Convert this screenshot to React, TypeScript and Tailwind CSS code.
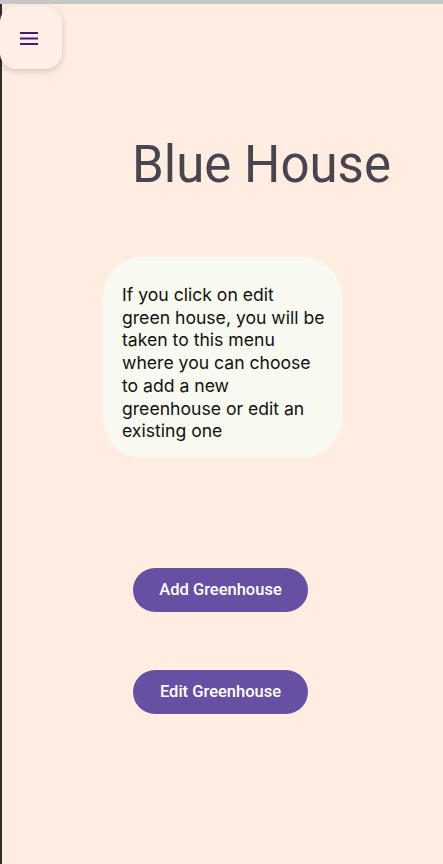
import React from "react";

const lines = [
  "If you click on edit",
  "green house, you will be",
  "taken to this menu",
  "where you can choose",
  "to add a new",
  "greenhouse or edit an",
  "existing one",
];

export default function App() {
  return (
    <div className="flex h-[864px] w-[443px] flex-col overflow-hidden bg-[#c6c6c6] pt-[4px]">
      <div className="flex flex-1 border-l-2 border-[#2e2e2e] bg-[#ffede2]">
        <div className="relative flex flex-1 flex-col items-center">
          <button className="absolute left-[-2px] top-[2px] flex h-[63px] w-[62px] items-center justify-center rounded-[16px] bg-[#fdeee6] shadow-[0_2px_6px_rgba(0,0,0,0.18)]">
            <svg width="20" height="16" viewBox="0 0 20 16" className="ml-[-4px]">
              <rect x="1" y="2" width="18" height="2" fill="#3c1f78" />
              <rect x="1" y="7.5" width="18" height="2" fill="#3c1f78" />
              <rect x="1" y="13" width="18" height="2" fill="#3c1f78" />
            </svg>
          </button>

          <h1 className="mt-[131px] ml-[78px] font-['Roboto',sans-serif] text-[51px] leading-[60px] text-[#49454f]">
            Blue House
          </h1>

          <div className="mt-[62px] w-[239px] whitespace-nowrap rounded-[40px] bg-[#f8f9f0] pl-[19px] pt-[27px] pb-[15px] font-['Inter',sans-serif] text-[17.6px] leading-[22.7px] text-[#111111]">
            {lines.map((l) => (
              <div key={l}>{l}</div>
            ))}
          </div>

          <button className="mt-[110px] ml-[-4px] h-[44px] w-[175px] rounded-full bg-[#6750a4] font-['Roboto',sans-serif] text-[16.5px] font-medium text-white">
            Add Greenhouse
          </button>
          <button className="mt-[58px] ml-[-4px] h-[44px] w-[175px] rounded-full bg-[#6750a4] font-['Roboto',sans-serif] text-[16.5px] font-medium text-white">
            Edit Greenhouse
          </button>
        </div>
      </div>
    </div>
  );
}
